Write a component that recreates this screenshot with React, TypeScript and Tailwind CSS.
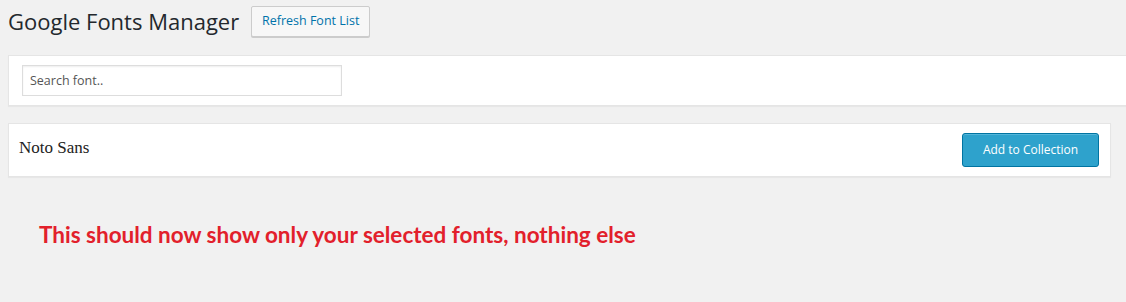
export default function App() {
  const ui = { fontFamily: '"Open Sans", "Noto Sans", sans-serif' };

  return (
    <div className="min-h-screen bg-[#f1f1f1] pl-2 pt-[6px] overflow-hidden" style={ui}>
      {/* header */}
      <div className="flex items-center h-[31px]">
        <h1 className="text-[22px] leading-[29px] text-[#23282d] font-normal">Google Fonts Manager</h1>
        <button className="ml-[12px] h-[31px] w-[119px] border border-[#cccccc] bg-[#f7f7f7] rounded-[2px] text-[12.5px] text-[#0073aa] font-medium shadow-[0_1px_0_#ccc]">
          Refresh Font List
        </button>
      </div>

      {/* search */}
      <div className="mt-[18px] -mr-4 h-[51px] bg-white border border-[#e5e5e5] shadow-[0_1px_1px_rgba(0,0,0,0.04)] pl-[13px] pt-[9px]">
        <input
          type="text"
          placeholder="Search font.."
          className="w-[320px] h-[31px] border border-[#dddddd] px-[7px] text-[12.5px] text-[#32373c] placeholder:text-[#555] outline-none shadow-[inset_0_1px_2px_rgba(0,0,0,0.07)]"
        />
      </div>

      {/* font list */}
      <div className="mt-[17px] w-[1103px] h-[54px] bg-white border border-[#e5e5e5] shadow-[0_1px_1px_rgba(0,0,0,0.04)] flex items-center justify-between pl-[10px] pr-[11px]">
        <span className="text-[17px] text-[#222] pb-[4px]" style={{ fontFamily: '"Liberation Serif", serif' }}>
          Noto Sans
        </span>
        <button className="w-[137px] h-[34px] bg-[#2ea2cc] border border-[#0074a2] rounded-[3px] text-white text-[12px] shadow-[inset_0_1px_0_rgba(120,200,230,0.5)]">
          Add to Collection
        </button>
      </div>

      {/* note */}
      <p
        className="mt-[44px] ml-[31px] text-[22.5px] font-bold text-[#e2202b] leading-[28px]"
        style={{ fontFamily: 'Lato, "Open Sans", sans-serif' }}
      >
        This should now show only your selected fonts, nothing else
      </p>
    </div>
  );
}
